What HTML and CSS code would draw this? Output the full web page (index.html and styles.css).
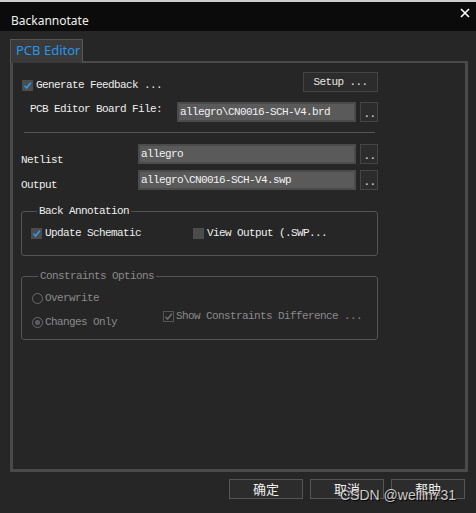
FILE: index.html
```html
<!DOCTYPE html>
<html>
<head>
<meta charset="utf-8">
<link rel="stylesheet" href="styles.css">
</head>
<body>
<div class="strip"></div>
<div class="titlebar">
  <span class="title">Backannotate</span>
  <svg class="close" width="10" height="10" viewBox="0 0 10 10"><path d="M1 1L9 9M9 1L1 9" stroke="#ffffff" stroke-width="1.6" fill="none"/></svg>
</div>
<div class="main">
  <div class="tab">PCB Editor</div>
  <div class="panel">
    <div class="inner">
      <div class="row r1">
        <label class="chk first"><span class="box on"><svg width="11" height="11" viewBox="0 0 11 11"><path d="M2.5 5.8L4.6 8L8.8 2.8" stroke="#2a9bf0" stroke-width="1.6" fill="none"/></svg></span>Generate Feedback ...</label>
        <button class="btn setup">Setup ...</button>
      </div>
      <div class="row r2">
        <span class="lbl indent">PCB Editor Board File:</span>
        <div class="field brd">allegro\CN0016-SCH-V4.brd</div>
        <button class="btn dots">..</button>
      </div>
      <div class="sep"></div>
      <div class="row r3">
        <span class="lbl low9">Netlist</span>
        <div class="field wide">allegro</div>
        <button class="btn dots">..</button>
      </div>
      <div class="row r4">
        <span class="lbl low8">Output</span>
        <div class="field wide">allegro\CN0016-SCH-V4.swp</div>
        <button class="btn dots">..</button>
      </div>
      <fieldset class="group g1">
        <legend>Back Annotation</legend>
        <div class="grid1">
          <label class="chk"><span class="box on"><svg width="11" height="11" viewBox="0 0 11 11"><path d="M2.5 5.8L4.6 8L8.8 2.8" stroke="#2a9bf0" stroke-width="1.6" fill="none"/></svg></span>Update Schematic</label>
          <label class="chk"><span class="box"></span>View Output (.SWP...</label>
        </div>
      </fieldset>
      <fieldset class="group g2 disabled">
        <legend>Constraints Options</legend>
        <div class="grid2">
          <div class="radios">
            <label class="rad"><span class="circle"></span>Overwrite</label>
            <label class="rad"><span class="circle sel"></span>Changes Only</label>
          </div>
          <label class="chk dis show"><span class="box dbox"><svg width="11" height="11" viewBox="0 0 11 11"><path d="M2.5 5.8L4.6 8L8.8 2.8" stroke="#6e6e6e" stroke-width="1.5" fill="none"/></svg></span>Show Constraints Difference ...</label>
        </div>
      </fieldset>
    </div>
  </div>
  <div class="actions">
    <button class="abtn">确定</button>
    <button class="abtn">取消</button>
    <button class="abtn">帮助</button>
  </div>
</div>
<div class="watermark">CSDN @weilin731</div>
</body>
</html>
```

FILE: styles.css
```css
html, body {
  margin: 0;
  padding: 0;
}
body {
  width: 476px;
  height: 513px;
  overflow: hidden;
  background: #262626;
  position: relative;
  font-family: "Liberation Mono", monospace;
  font-size: 11px;
  letter-spacing: -0.6px;
  color: #eeeeee;
}
.strip {
  height: 2px;
  background: #cfcfcf;
}
.titlebar {
  height: 29px;
  background: #0b0b0b;
  display: flex;
  align-items: center;
  justify-content: space-between;
  padding: 0 6px 0 11px;
}
.title {
  font-family: "Noto Sans", sans-serif;
  font-size: 12px;
  letter-spacing: 0;
  color: #f0f0f0;
  margin-top: 7px;
}
.close {
  margin-top: -8px;
}
.main {
  padding: 8px 8px 0 10px;
}
.tab {
  box-sizing: border-box;
  width: 73px;
  height: 24px;
  margin-bottom: -2px;
  position: relative;
  z-index: 1;
  background: #3a3a3a;
  border: 1px solid #565656;
  border-bottom: none;
  font-family: "Noto Sans", sans-serif;
  font-size: 13px;
  letter-spacing: 0;
  color: #2596ef;
  padding-left: 5px;
  line-height: 20px;
}
.panel {
  box-sizing: border-box;
  width: 458px;
  height: 411px;
  border: 3px solid #4a4a4a;
  border-top-width: 2px;
}
.inner {
  padding: 9px 87px 0 8px;
}
.row {
  display: flex;
  height: 20px;
}
.r1 {
  align-items: center;
  justify-content: space-between;
}
.r2 { margin-top: 10px; }
.r3 { margin-top: 11px; }
.r4 { margin-top: 6px; }
.lbl {
  line-height: 14px;
  white-space: nowrap;
}
.indent { margin-left: 9px; }
.low9 { padding-top: 9px; }
.low8 { padding-top: 8px; }
.field {
  box-sizing: border-box;
  height: 20px;
  margin-left: auto;
  background: #5a5a5a;
  border: 2px solid #4b4b4b;
  color: #f2f2f2;
  padding-left: 1px;
  line-height: 16px;
  white-space: nowrap;
  overflow: hidden;
}
.brd { width: 179px; }
.wide { width: 218px; }
.btn {
  box-sizing: border-box;
  height: 20px;
  margin: 0;
  background: #2c2c2c;
  border: 1px solid #454545;
  color: #e6e6e6;
  font-family: "Liberation Mono", monospace;
  font-size: 11px;
  letter-spacing: -0.6px;
  padding: 0;
}
.setup { width: 75px; }
.dots {
  width: 18px;
  margin-left: 4px;
  line-height: 22px;
  padding-left: 1px;
}
.sep {
  height: 1px;
  background: #555555;
  margin: 10px 3px 0 3px;
}
.chk, .rad {
  display: flex;
  align-items: center;
  white-space: nowrap;
  line-height: 12px;
  height: 12px;
}
.first {
  margin-left: 1px;
  margin-top: 6px;
}
.box {
  box-sizing: border-box;
  width: 11px;
  height: 11px;
  background: #4c4c4c;
  margin-right: 3px;
  display: flex;
}
.box.dbox {
  background: transparent;
  border: 1px solid #555555;
  margin-right: 2px;
}
.box.dbox svg {
  margin: -1px;
}
.group {
  margin: 13px 0 0 0;
  padding: 0;
  border: 1px solid #545454;
  border-radius: 3px;
  min-width: 0;
}
.group legend {
  margin-left: 6px;
  padding: 0 2px;
  line-height: 14px;
}
.g1 {
  margin-top: 14px;
  padding: 9px 0 16px 9px;
}
.grid1 {
  display: grid;
  grid-template-columns: 162px auto;
}
.g2 {
  padding: 9px 0 11px 10px;
}
.disabled legend,
.disabled {
  color: #8a8a8a;
}
.grid2 {
  display: grid;
  grid-template-columns: 131px auto;
  align-items: start;
}
.radios {
  display: flex;
  flex-direction: column;
  gap: 12px;
}
.rad .circle {
  box-sizing: border-box;
  width: 11px;
  height: 11px;
  border-radius: 50%;
  border: 1px solid #6a6a6a;
  margin-right: 2px;
  display: flex;
  align-items: center;
  justify-content: center;
}
.circle.sel::after {
  content: "";
  width: 5px;
  height: 5px;
  border-radius: 50%;
  background: #5e5e5e;
}
.show {
  margin-top: 18px;
}
.actions {
  display: flex;
  justify-content: flex-end;
  gap: 7px;
  margin-top: 7px;
  padding-right: 3px;
}
.abtn {
  box-sizing: border-box;
  width: 74px;
  height: 20px;
  margin: 0;
  padding: 0;
  background: #2c2c2c;
  border: 1px solid #555555;
  color: #f0f0f0;
  font-family: "Noto Sans CJK SC", sans-serif;
  font-size: 13px;
  line-height: 18px;
}
.watermark {
  position: absolute;
  left: 340px;
  top: 487px;
  font-family: "Liberation Sans", sans-serif;
  font-size: 14px;
  letter-spacing: 0;
  color: rgba(235, 235, 235, 0.85);
  text-shadow: 1px 1px 1px #000000;
}
```
